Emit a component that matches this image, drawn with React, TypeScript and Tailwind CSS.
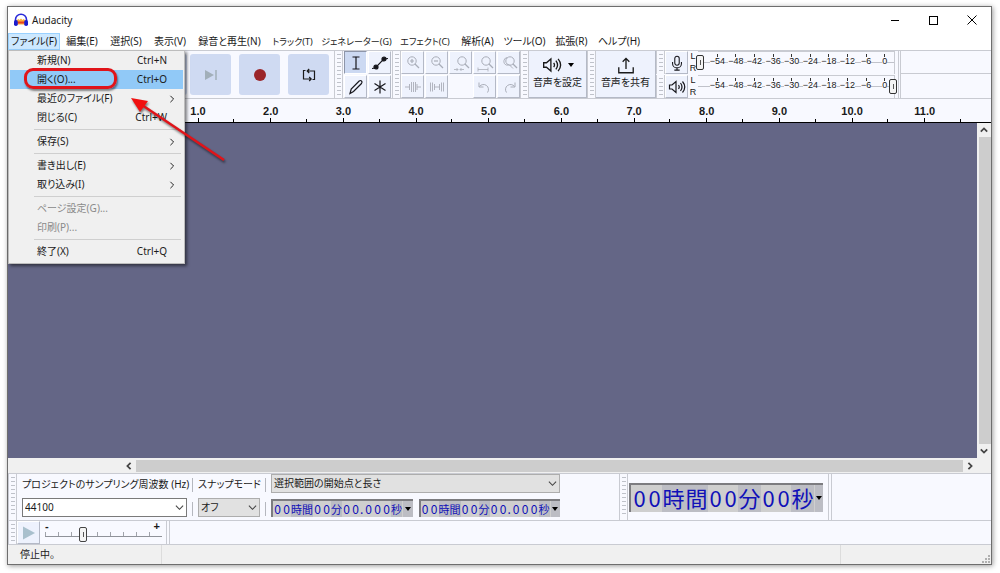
'use client'

import type { ReactNode } from 'react'

const menus = [
  { label: 'ファイル(F)', width: 'w-[52px]' },
  { label: '編集(E)', width: 'w-[44px]' },
  { label: '選択(S)', width: 'w-[44px]' },
  { label: '表示(V)', width: 'w-[44px]' },
  { label: '録音と再生(N)', width: 'w-[75px]' },
  { label: 'トラック(T)', width: 'w-[51px] text-[9px]' },
  { label: 'ジェネレーター(G)', width: 'w-[77px] text-[9px]' },
  { label: 'エフェクト(C)', width: 'w-[60px] text-[9px]' },
  { label: '解析(A)', width: 'w-[45px]' },
  { label: 'ツール(O)', width: 'w-[49px]' },
  { label: '拡張(R)', width: 'w-[45px]' },
  { label: 'ヘルプ(H)', width: 'w-[50px]' },
]

type FileItem = { label: string; keys?: string; sub?: boolean; disabled?: boolean; active?: boolean }

const fileGroups: FileItem[][] = [
  [
    { label: '新規(N)', keys: 'Ctrl+N' },
    { label: '開く(O)...', keys: 'Ctrl+O', active: true },
    { label: '最近のファイル(F)', sub: true },
    { label: '閉じる(C)', keys: 'Ctrl+W' },
  ],
  [{ label: '保存(S)', sub: true }],
  [
    { label: '書き出し(E)', sub: true },
    { label: '取り込み(I)', sub: true },
  ],
  [
    { label: 'ページ設定(G)...', disabled: true },
    { label: '印刷(P)...', disabled: true },
  ],
  [{ label: '終了(X)', keys: 'Ctrl+Q' }],
]

const levels = ['-54', '-48', '-42', '-36', '-30', '-24', '-18', '-12', '-6', '0']
const seconds = Array.from({ length: 12 }, (_, i) => `${i}.0`)

function Icon({ children, className = 'size-[18px]' }: { children: ReactNode; className?: string }) {
  return (
    <svg viewBox="0 0 18 18" className={className} fill="none" stroke="currentColor" strokeWidth="1.2" aria-hidden="true">
      {children}
    </svg>
  )
}

function Chevron({ className, bold }: { className: string; bold?: boolean }) {
  return (
    <svg viewBox="0 0 10 10" className={className} fill="none" stroke="currentColor" strokeWidth={bold ? 2.2 : 1.2} aria-hidden="true">
      <path d="M1 3l4 4 4-4" />
    </svg>
  )
}

function Grip() {
  return (
    <div className="flex w-[9px] shrink-0 justify-center self-stretch border-x border-[#c9cbd2] bg-[#f8f9ff] py-[3px]">
      <div className="w-1 bg-[repeating-linear-gradient(to_bottom,#bfc2ca_0_1px,transparent_1px_4px)]" />
    </div>
  )
}

/* ---- Title bar ---- */

function Logo() {
  return (
    <svg viewBox="0 0 16 16" className="size-4" aria-hidden="true">
      <path d="M4 12.500V8l1.500-1 1 1L8 6.500 9.500 8l1-1L12 8v4.500z" fill="#fbb03b" />
      <path d="M4.500 10.500h7" stroke="#e8401e" strokeWidth="2" />
      <path d="M2.500 10V7.500a5.500 5.300 0 0 1 11 0V10" fill="none" stroke="#2a2ad8" strokeWidth="1.600" />
      <rect x="1" y="8" width="3.800" height="6" rx="1.800" fill="#1c1ccc" />
      <rect x="11.200" y="8" width="3.800" height="6" rx="1.800" fill="#1c1ccc" />
    </svg>
  )
}

function TitleBar() {
  return (
    <header className="flex h-[26px] shrink-0 items-center bg-white pl-[5px]">
      <Logo />
      <h1 className="ml-[3px] flex-1">Audacity</h1>
      <button aria-label="最小化" className="flex h-full w-[38px] items-center justify-center">
        <span className="h-px w-2 bg-black" />
      </button>
      <button aria-label="最大化" className="flex h-full w-[38px] items-center justify-center">
        <span className="size-[9px] border border-black" />
      </button>
      <button aria-label="閉じる" className="flex h-full w-[39px] items-center justify-center">
        <svg viewBox="0 0 10 10" className="size-[10px]" stroke="#000" aria-hidden="true">
          <path d="M.5.5l9 9M9.500.5l-9 9" />
        </svg>
      </button>
    </header>
  )
}

/* ---- Menus ---- */

function FileMenu() {
  return (
    <div role="menu" className="absolute top-full left-0 z-10 w-[177px] border border-[#bdbdbd] bg-[#f0f0f0] px-px pb-[2px] shadow-[2px_2px_3px_rgba(0,0,0,0.5)]">
      {fileGroups.map((group, g) => (
        <div key={g}>
          {g > 0 && <div className="mr-[2px] ml-6 flex h-[5px] items-center"><span className="h-px w-full bg-[#cfcfcf]" /></div>}
          {group.map((item) => (
            <button
              key={item.label}
              role="menuitem"
              disabled={item.disabled}
              className={`flex h-[19px] w-full items-center pl-[27px] text-left ${item.active ? 'bg-[#91c9f7]' : ''} ${item.disabled ? 'text-[#8a8a8a]' : ''}`}
            >
              <span className="flex-1">{item.label}</span>
              {item.keys && <span className="pr-4 text-right whitespace-nowrap">{item.keys}</span>}
              {item.sub && <Chevron className="mr-[7px] size-2 -rotate-90" />}
            </button>
          ))}
        </div>
      ))}
      {/* Marker round the open command */}
      <div className="absolute top-[17px] left-[15px] h-[21px] w-[93px] rounded-[9px] border-[3px] border-[#e0141a] shadow-[1px_2px_2px_rgba(0,0,0,0.45)]" />
      <svg viewBox="0 0 100 72" className="absolute top-[44px] left-[121px] h-[72px] w-[100px] drop-shadow-[1px_2px_1px_rgba(0,0,0,0.5)]" aria-hidden="true">
        <path d="M12 10L94 65" stroke="#e0141a" strokeWidth="2.500" />
        <path d="M1 3l17 3-8 11z" fill="#f01010" />
      </svg>
    </div>
  )
}

function MenuBar() {
  return (
    <nav className="flex h-[17px] shrink-0 bg-white">
      {menus.map((menu, i) => (
        <div key={menu.label} className={`relative shrink-0 ${menu.width}`}>
          <button
            aria-haspopup="menu"
            className={`flex h-full w-full items-center justify-center whitespace-nowrap ${i === 0 ? 'border border-[#99d1ff] bg-[#cce8ff]' : ''}`}
          >
            {menu.label}
          </button>
          {i === 0 && <FileMenu />}
        </div>
      ))}
    </nav>
  )
}

/* ---- Toolbars ---- */

function TransportButton({ label, children }: { label: string; children: ReactNode }) {
  return (
    <button aria-label={label} className="flex h-[41px] w-[41px] shrink-0 items-center justify-center rounded-[3px] bg-[#cfdaf2]">
      {children}
    </button>
  )
}

function Tool({ label, on, dim, children }: { label: string; on?: boolean; dim?: boolean; children: ReactNode }) {
  return (
    <button
      aria-label={label}
      className={`flex h-[23px] w-[23px] items-center justify-center border ${on ? 'border-t-[#8d95a8] border-r-white border-b-white border-l-[#8d95a8] bg-[#ccd9f2]' : 'border-t-white border-r-[#b4b9c6] border-b-[#b4b9c6] border-l-white bg-[#eef2fd]'} ${dim ? 'text-[#a9adb8]' : 'text-[#16161c]'}`}
    >
      {children}
    </button>
  )
}

function Lens({ children, cx = 8 }: { children?: ReactNode; cx?: number }) {
  return (
    <Icon>
      <circle cx={cx} cy="7" r="4.200" strokeWidth="1" />
      <path d={`M${cx + 3} 10l4 4`} strokeWidth="1.300" />
      {children}
    </Icon>
  )
}

function Speaker({ className = 'size-[18px]' }: { className?: string }) {
  return (
    <Icon className={className}>
      <path d="M1.500 7v4h2.500l4 3.500v-11L4 7zM10.500 7q1.500 2 0 4M12.500 5q3 4 0 8M14.500 3.500q4.500 5.500 0 11" />
    </Icon>
  )
}

function Meter({ label, end, icon }: { label: string; end?: boolean; icon: ReactNode }) {
  return (
    <div className="flex h-[23px]">
      <Grip />
      <Tool label={label}>{icon}</Tool>
      <div className="flex w-[10px] flex-col items-center justify-between font-['Liberation_Sans',sans-serif] text-[9px] leading-[11px]">
        <span>L</span>
        <span>R</span>
      </div>
      <div className="relative mr-[3px] flex w-[197px] flex-col border-t border-r border-[#c9cbd2]">
        <div className="flex h-full items-start bg-[linear-gradient(to_bottom,transparent_10px,#c0c2ca_10px,#c0c2ca_11px,transparent_11px)] pt-[2px] pl-[10px] font-['Liberation_Sans',sans-serif] text-[9px]">
          {levels.map((level) => (
            <div key={level} className="flex flex-1 flex-col items-center leading-[9px]">
              <span className="h-[3px] w-px bg-[#333]" />
              <span className="bg-[#f8f9ff]">{level.replace('-', '−')}</span>
            </div>
          ))}
        </div>
        <div className={`absolute top-[3px] flex h-[15px] w-2 items-center justify-center rounded-[2px] border border-[#333] bg-[#f4f4f4] ${end ? 'right-[-3px]' : 'left-[-2px]'}`}>
          <span className="h-[5px] w-px bg-[#555]" />
        </div>
      </div>
    </div>
  )
}

function ToolBars() {
  return (
    <div className="flex h-[48px] shrink-0 overflow-hidden border-t border-[#c9cbd2] bg-[#f8f9ff]">
      <Grip />
      <div className="flex w-[317px] shrink-0 items-center gap-2">
        <div className="flex gap-[2px]">
          <TransportButton label="一時停止"><Icon><path d="M6 4v10M12 4v10" strokeWidth="2" /></Icon></TransportButton>
          <TransportButton label="再生"><Icon><path d="M4 3l11 6-11 6z" fill="#3a3" stroke="none" /></Icon></TransportButton>
          <TransportButton label="停止"><Icon><path d="M4 4h10v10H4z" fill="currentColor" stroke="none" /></Icon></TransportButton>
          <div className="flex gap-[3px]">
            <TransportButton label="先頭へ"><Icon><path d="M14 3L4 9l10 6z" fill="#aab4c2" stroke="none" /></Icon></TransportButton>
            <TransportButton label="末尾へ">
              <Icon><path d="M3 4l9 5-9 5z" fill="#a2afb9" stroke="none" /><path d="M14 4v10" stroke="#a2afb9" strokeWidth="1.500" /></Icon>
            </TransportButton>
          </div>
        </div>
        <TransportButton label="録音"><span className="size-3 rounded-full bg-[#9b2529]" /></TransportButton>
        <TransportButton label="ループ">
          <Icon><path d="M5.500 4.500H3.500v8.500h7.500M9.200 11l2 2-2 2M12.500 13.500h2V5H7.500M9.200 3l-2 2 2 2" /></Icon>
        </TransportButton>
      </div>
      <Grip />
      <div className="grid shrink-0 grid-cols-[24px_24px] grid-rows-[24px_24px] pl-px">
        <Tool label="選択ツール" on><Icon><path d="M5.500 3h3l.5.5.5-.5h3M5.500 15h3l.5-.5.5.5h3M9 3.500v11" /></Icon></Tool>
        <Tool label="エンベロープツール">
          <Icon><path d="M1 14.500q3.500 0 5-2.500l5-5q1.500-2.500 6-2.500" /><circle cx="5" cy="13" r="2" fill="currentColor" /><circle cx="13" cy="5" r="2" fill="currentColor" /></Icon>
        </Tool>
        <Tool label="描画ツール"><Icon><path d="M3 15.500l1.200-4.500 8-8q1.200-1 2.300 0t0 2.500l-8 8z" /></Icon></Tool>
        <Tool label="マルチツール"><Icon><path d="M9 2.500v13M3.500 5.500l11 7M14.500 5.500l-11 7" /></Icon></Tool>
      </div>
      <Grip />
      <div className="grid shrink-0 grid-cols-[24px_24px_24px_24px_23px] grid-rows-[24px_24px]">
        <Tool label="ズームイン" dim><Lens><path d="M6 7h4M8 5v4" /></Lens></Tool>
        <Tool label="ズームアウト" dim><Lens><path d="M6 7h4" /></Lens></Tool>
        <Tool label="選択範囲に合わせる" dim><Lens cx={10}><path d="M2 15.500h4M4.500 14L6 15.500 4.500 17M12 15.500H8M9.500 14L8 15.500 9.500 17" strokeWidth=".8" /></Lens></Tool>
        <Tool label="プロジェクトに合わせる" dim><Lens cx={10}><path d="M2 15.500h10M2 13.500v4M12 13.500v4" strokeWidth=".8" /></Lens></Tool>
        <Tool label="ズーム切り替え" dim><Lens cx={10}><path d="M7 3.500a4 4 0 0 0-1 7.500q2 .5 3-.5l4 4" strokeWidth=".9" /></Lens></Tool>
        <Tool label="トリム" dim><Icon><path d="M1 9h4M13 9h4M5.500 6v6M7.500 4v10M9.500 4v10M11.500 4v10M13 6v6" strokeWidth=".9" /></Icon></Tool>
        <Tool label="無音化" dim><Icon><path d="M2.500 4.500v9M4.500 4.500v9M6.500 6v6M6.500 9h5M11.500 6v6M13.500 4.500v9M15.500 4.500v9" strokeWidth=".9" /></Icon></Tool>
        <span />
        <Tool label="元に戻す" dim><Icon><path d="M11.500 14.500a5 5 0 1 0-8-6M3 4.500v4.500h4.500" strokeWidth="1" /></Icon></Tool>
        <Tool label="やり直す" dim><Icon><path d="M6.500 14.500a5 5 0 1 1 8-6M15 4.500v4.500h-4.500" strokeWidth="1" /></Icon></Tool>
      </div>
      <Grip />
      <button className="flex w-[58px] shrink-0 flex-col items-center border-r border-b border-[#b4b9c6] bg-[#eef2fd] pt-1">
        <span className="flex items-center gap-[6px]"><Speaker className="size-5" /><span className="border-x-[3px] border-t-[4px] border-x-transparent border-t-black" /></span>
        <span className="leading-[15px] whitespace-nowrap">音声を設定</span>
      </button>
      <Grip />
      <button className="flex w-[60px] shrink-0 flex-col items-center border-r border-b border-[#b4b9c6] bg-[#eef2fd] pt-1">
        <Icon className="size-5"><path d="M2.500 11v5h13v-5M9 12.500V3M6 6l3-3 3 3" /></Icon>
        <span className="leading-[15px] whitespace-nowrap">音声を共有</span>
      </button>
      <div className="flex shrink-0 flex-col gap-px border-r border-[#c9cbd2]">
        <Meter label="録音メーター" icon={<Icon className="size-4"><rect x="6.500" y="1.500" width="5" height="10" rx="2.500" /><path d="M4 8v1.500a5 5 0 0 0 10 0V8M9 14.500V17M6 17h6" /></Icon>} />
        <Meter label="再生メーター" end icon={<Speaker />} />
      </div>
      <div className="ml-px flex flex-1 flex-col border-l border-[#c9cbd2]">
        <span className="h-[23px] border-b border-[#c9cbd2]" />
      </div>
    </div>
  )
}

/* ---- Track area ---- */

function Ruler() {
  return (
    <div className="flex h-[25px] shrink-0 border-t border-b border-t-[#c9cbd2] border-b-black bg-[#f8f9ff] pr-[30px] pl-[81px] font-['Liberation_Sans',sans-serif] text-[11px] font-bold">
      {seconds.map((s) => (
        <div key={s} className="flex flex-1 flex-col justify-end">
          <span className="text-center leading-[13px]">{s}</span>
          <div className="grid grid-cols-[1fr_1px_1fr] items-end">
            <span />
            <span className="h-[4px] bg-black" />
            <span className="ml-auto h-[3px] w-px bg-black" />
          </div>
        </div>
      ))}
    </div>
  )
}

function TrackArea() {
  return (
    <main className="flex min-h-0 flex-1 flex-col">
      <div className="flex min-h-0 flex-1">
        <div className="flex-1 bg-[#646686]" />
        <div className="flex w-[14px] flex-col items-center bg-[#f0f0f0] text-[#444]">
          <Chevron bold className="my-[3px] size-2 rotate-180" />
          <span className="ml-px w-3 flex-1 bg-[#cdcdcd]" />
          <Chevron bold className="my-[3px] size-2" />
        </div>
      </div>
      <div className="flex h-[15px] shrink-0 items-center bg-[#f0f0f0] pr-[17px] pl-[117px] text-[#444]">
        <Chevron bold className="mr-[3px] size-2 rotate-90" />
        <span className="h-3 flex-1 bg-[#cdcdcd]" />
        <Chevron bold className="ml-[3px] size-2 -rotate-90" />
      </div>
    </main>
  )
}

/* ---- Selection and time ---- */

function SelectBox({ id, value, className, label }: { id: string; value: string; className: string; label?: string }) {
  return (
    <div className="relative">
      <select id={id} aria-label={label} className={`w-full appearance-none border pl-[2px] ${className}`}>
        <option>{value}</option>
      </select>
      <Chevron className="pointer-events-none absolute inset-y-0 right-[3px] my-auto size-[9px] text-[#444]" />
    </div>
  )
}

function TimeText({ value, label, big }: { value: string; label: string; big?: boolean }) {
  return (
    <div
      role="group"
      aria-label={label}
      className={`flex border-t-2 border-l-2 border-[#7c7c80] bg-[#cfcfcf] font-['Noto_Sans_CJK_JP',sans-serif] text-[#1010b8] ${big ? 'h-[29px] pl-px text-[22px] leading-[25px]' : 'h-[18px] text-[12px] leading-4'}`}
    >
      {value.split('').map((c, i) => {
        if (c === '.') return <span key={i} className="w-1">{c}</span>
        if (/\d/.test(c)) return <span key={i} className={`text-center ${big ? 'w-[15px]' : 'w-[9px]'}`}>{c}</span>
        return <span key={i} className={`bg-[#bcbdc4] text-center ${big ? 'w-[23px]' : 'w-[11px] text-[11px]'}`}>{c}</span>
      })}
      <button aria-label="形式" className={`ml-px flex flex-1 items-center justify-center bg-[#bcbdc4] ${big ? 'w-2' : 'w-[9px]'}`}>
        <span className="border-x-[3px] border-t-[4px] border-x-transparent border-t-black" />
      </button>
    </div>
  )
}

function Bar() {
  return (
    <div className="flex w-[11px] flex-col items-center justify-between py-1">
      <span className="h-[14px] w-px bg-[#b5b7be]" />
      <span className="h-[14px] w-px bg-[#b5b7be]" />
    </div>
  )
}

function SelectionBar() {
  return (
    <div className="flex h-[47px] shrink-0 border-t border-[#c9cbd2] bg-[#f8f9ff]">
      <Grip />
      <div className="ml-[5px] flex w-[165px] flex-col justify-between pt-[3px] pb-[3px]">
        <label htmlFor="rate" className="leading-[15px] whitespace-nowrap">プロジェクトのサンプリング周波数 (Hz)</label>
        <SelectBox id="rate" value="44100" className="h-[19px] border-[#7a7a7a] bg-white" />
      </div>
      <Bar />
      <div className="flex w-[62px] flex-col justify-between pt-[3px] pb-[3px]">
        <label htmlFor="snap" className="leading-[15px] whitespace-nowrap">スナップモード</label>
        <SelectBox id="snap" value="オフ" className="h-[19px] border-[#adadad] bg-[#e1e1e1]" />
      </div>
      <Bar />
      <div className="flex w-[289px] flex-col justify-between pb-[3px]">
        <SelectBox id="range" label="選択範囲" value="選択範囲の開始点と長さ" className="h-[19px] border-[#adadad] bg-[#e1e1e1]" />
        <div className="grid grid-cols-2 gap-[6px]">
          <TimeText label="開始点" value="00時間00分00.000秒" />
          <TimeText label="長さ" value="00時間00分00.000秒" />
        </div>
      </div>
      <div className="ml-[59px] flex">
        <Grip />
        <div className="mr-[3px] ml-px w-[194px] self-center"><TimeText label="時間" value="00時間00分00秒" big /></div>
      </div>
      <div className="ml-[2px] flex-1 border-l border-[#c9cbd2]"><div className="ml-[2px] h-full border-l border-[#c9cbd2]" /></div>
    </div>
  )
}

function SpeedBar() {
  return (
    <div className="flex h-6 shrink-0 border-t border-[#c9cbd2] bg-[#f8f9ff]">
      <Grip />
      <Tool label="指定速度で再生"><Icon><path d="M3 2.500l12 6.500-12 6.500z" fill="#a9c0cd" stroke="none" /></Icon></Tool>
      <div className="relative ml-[5px] w-[117px] pt-px font-['Liberation_Sans',sans-serif] text-[11px] leading-[9px] font-bold">
        <div className="flex justify-between pr-[2px]"><span>-</span><span>+</span></div>
        <div className="mt-px h-[5px] border-b border-[#8f9299] bg-[repeating-linear-gradient(to_right,#a0a3aa_0_1px,transparent_1px_13px)]" />
        <input type="range" aria-label="再生速度" defaultValue="33" className="absolute inset-0 m-0 w-full opacity-0" />
        <span className="pointer-events-none absolute top-[6px] left-[34px] flex h-[15px] w-2 items-center justify-center rounded-[2px] border border-[#444] bg-[#f4f4f4]"><span className="h-[5px] w-px bg-[#555]" /></span>
      </div>
      <div className="ml-[4px] flex-1 border-l border-[#c9cbd2]"><div className="ml-[2px] h-full border-l border-[#c9cbd2]" /></div>
    </div>
  )
}

function StatusBar() {
  return (
    <footer className="flex h-5 shrink-0 items-center border-t border-[#c9cbd2] bg-[#f0f0f0] pl-3">
      <span className="w-[141px]">停止中。</span>
      <span className="h-full flex-1 border-l border-[#dcdcdc]" />
      <span className="flex h-full w-[151px] items-end justify-end border-l border-[#dcdcdc]">
        <svg viewBox="0 0 9 9" className="size-[9px]" fill="#b0b0b0" aria-hidden="true">
          <path d="M6 0h2v2H6zM6 3h2v2H6zM3 3h2v2H3zM6 6h2v2H6zM3 6h2v2H3zM0 6h2v2H0z" />
        </svg>
      </span>
    </footer>
  )
}

export default function App() {
  return (
    <div className="flex h-screen bg-white pt-[6px] pr-2 pb-2 pl-[7px] font-['Noto_Sans','Noto_Sans_CJK_JP',sans-serif] text-[10px] text-[#1a1a1a] [font-feature-settings:'palt']">
      <div className="flex min-w-0 flex-1 flex-col border border-[#6e6e6e] shadow-[1px_1px_5px_rgba(0,0,0,0.4)]">
        <TitleBar />
        <MenuBar />
        <ToolBars />
        <Ruler />
        <TrackArea />
        <SelectionBar />
        <SpeedBar />
        <StatusBar />
      </div>
    </div>
  )
}
